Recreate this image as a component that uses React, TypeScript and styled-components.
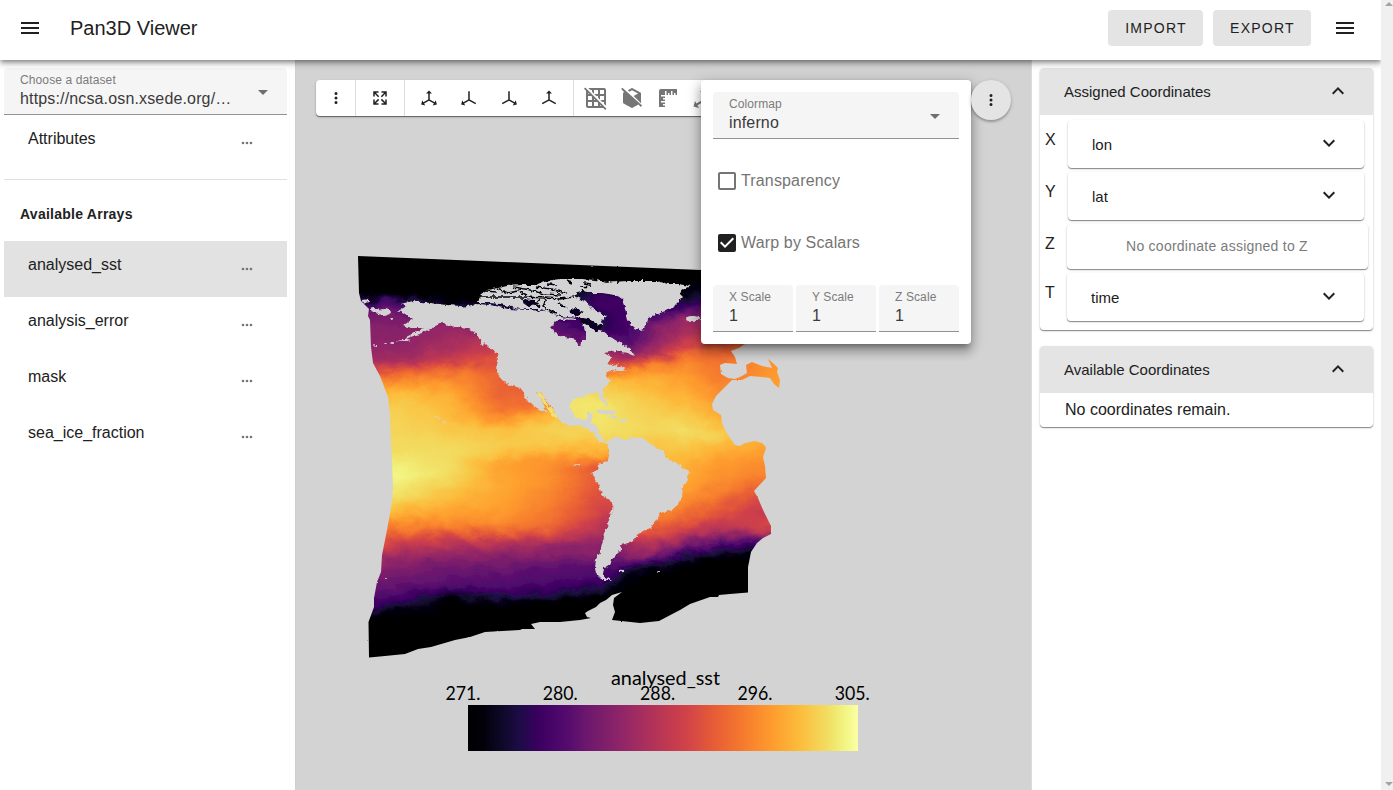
import React from "react";
import styled, { createGlobalStyle } from "styled-components";

const GlobalStyle = createGlobalStyle`
  *, *::before, *::after { box-sizing: border-box; }
  html, body { margin: 0; padding: 0; overflow: hidden; }
  body {
    font-family: "Liberation Sans", Arial, sans-serif;
    font-size: 16px;
    line-height: 24px;
    color: #212121;
    background: #fff;
  }
`;

/* ---------- layout ---------- */
const Window = styled.div`
  display: flex;
  width: 100vw;
  height: 100vh;
`;
const Page = styled.div`
  flex: 1;
  min-width: 0;
  display: flex;
  flex-direction: column;
`;
const ScrollTrack = styled.div`
  width: 12px;
  background: #f0f0f0;
  display: flex;
  flex-direction: column;
  justify-content: space-between;
  align-items: flex-end;
  padding: 2px 0 3px;
  position: relative;
  z-index: 6;
`;
const AppBar = styled.header`
  position: relative;
  z-index: 5;
  height: 60px;
  flex: none;
  display: flex;
  align-items: center;
  padding: 0 24px 4px 18px;
  background: #fff;
  box-shadow: 0 2px 4px -1px rgba(0, 0, 0, 0.3), 0 4px 5px rgba(0, 0, 0, 0.2), 0 1px 10px rgba(0, 0, 0, 0.16);
`;
const Title = styled.h1`
  margin: 0 auto 0 28px;
  font-size: 20px;
  font-weight: 400;
  line-height: 28px;
`;
const BarButton = styled.button<{ $w: number }>`
  width: ${(p) => p.$w}px;
  height: 36px;
  margin-right: 10px;
  padding: 0 0 0 1px;
  border: 0;
  border-radius: 4px;
  background: #e4e4e4;
  color: #212121;
  font: 14px "Liberation Sans", Arial, sans-serif;
  letter-spacing: 1.25px;
`;
const MenuSlot = styled.div`
  display: flex;
  margin-left: 12px;
`;
const Body = styled.div`
  flex: 1;
  min-height: 0;
  display: flex;
`;

/* ---------- left drawer ---------- */
const LeftDrawer = styled.aside`
  width: 296px;
  padding: 8px 8px 0 4px;
  border-right: 1px solid #cfcfcf;
`;
const Field = styled.div`
  flex: 1;
  height: 47px;
  display: flex;
  align-items: center;
  padding: 0 12px 0 16px;
  border-radius: 4px 4px 0 0;
  border-bottom: 1px solid #939393;
  background: #f5f5f5;
`;
const FieldText = styled.div`
  flex: 1;
  min-width: 0;
`;
const FieldLabel = styled.div`
  margin-top: 1px;
  font-size: 12px;
  line-height: 14px;
  letter-spacing: 0.11px;
  color: #7b7b7b;
  white-space: nowrap;
`;
const FieldValue = styled.div`
  font-size: 16px;
  line-height: 23px;
  letter-spacing: 0.15px;
  color: #3a3a3a;
  white-space: nowrap;
`;
const CaretSlot = styled.span`
  display: flex;
  padding-top: 2px;
`;
const ArrayRow = styled.div<{ $active?: boolean }>`
  height: 56px;
  display: flex;
  justify-content: space-between;
  padding: 12px 32px 0 24px;
  background: ${(p) => (p.$active ? "#e2e2e2" : "transparent")};
`;
const AttributesRow = styled(ArrayRow)`
  height: 65px;
  border-bottom: 1px solid #e0e0e0;
`;
const ListHeading = styled.div`
  height: 61px;
  padding: 22px 0 0 16px;
  font-size: 14px;
  font-weight: 700;
  letter-spacing: 0.25px;
`;
const DotsSlot = styled.span`
  display: flex;
  padding-top: 8px;
`;

/* ---------- viewport ---------- */
const Viewport = styled.main`
  position: relative;
  flex: 1;
  min-width: 0;
  background: #d3d3d3;
  overflow: hidden;
`;
const Scene = styled.svg`
  display: block;
  width: 735px;
  height: 730px;
`;
const Toolbar = styled.div`
  position: absolute;
  left: 20px;
  top: 20px;
  width: 655px;
  height: 36px;
  display: flex;
  border-radius: 4px;
  background: #fff;
  box-shadow: 0 1px 1px rgba(0, 0, 0, 0.5), 0 1px 3px rgba(0, 0, 0, 0.15);
`;
const ToolGroup = styled.div<{ $pad: string }>`
  display: flex;
  align-items: center;
  padding: ${(p) => p.$pad};
  & + & { border-left: 1px solid #dcdcdc; }
`;
const Tool = styled.span<{ $w: number; $muted?: boolean }>`
  width: ${(p) => p.$w}px;
  display: flex;
  justify-content: center;
  color: ${(p) => (p.$muted ? "#757575" : "#212121")};
`;
const RoundButton = styled.div`
  position: absolute;
  left: 675px;
  top: 20px;
  width: 40px;
  height: 40px;
  display: flex;
  align-items: center;
  justify-content: center;
  border-radius: 50%;
  background: #e4e4e4;
  box-shadow: 0 2px 2px rgba(0, 0, 0, 0.2), 0 1px 4px rgba(0, 0, 0, 0.16);
`;
const Popup = styled.div`
  position: absolute;
  left: 405px;
  top: 20px;
  width: 270px;
  height: 264px;
  padding: 12px;
  border-radius: 4px;
  background: #fff;
  box-shadow: 0 5px 5px -3px rgba(0, 0, 0, 0.3), 0 8px 10px 1px rgba(0, 0, 0, 0.2), 0 3px 14px 2px rgba(0, 0, 0, 0.18);
`;
const FieldLine = styled.div<{ $top?: number }>`
  display: flex;
  gap: 3px;
  padding-top: ${(p) => p.$top ?? 0}px;
`;
const CheckLine = styled.div<{ $h: number }>`
  height: ${(p) => p.$h}px;
  display: flex;
  align-items: center;
  gap: 2px;
  padding-left: 2px;
  color: #757575;
  letter-spacing: 0.15px;
`;

/* ---------- right drawer ---------- */
const RightDrawer = styled.aside`
  width: 350px;
  padding: 8px 8px 0;
  border-left: 1px solid #dcdcdc;
`;
const Panel = styled.section<{ $h: number }>`
  height: ${(p) => p.$h}px;
  margin-bottom: 16px;
  border-radius: 4px;
  background: #fff;
  box-shadow: 0 1px 1px rgba(0, 0, 0, 0.42), 0 1px 3px rgba(0, 0, 0, 0.12);
`;
const PanelHead = styled.div`
  height: 47px;
  display: flex;
  align-items: center;
  justify-content: space-between;
  padding: 0 23px 0 24px;
  border-radius: 4px 4px 0 0;
  background: #e4e4e4;
  font-size: 15px;
`;
const ChevronSlot = styled.span<{ $lift: number }>`
  display: flex;
  padding-bottom: ${(p) => p.$lift}px;
`;
const PanelText = styled.div`
  padding: 5px 25px;
`;
const AxisList = styled.div`
  display: flex;
  flex-direction: column;
  gap: 4px;
  padding: 5px 0 0 5px;
`;
const AxisRow = styled.div`
  display: flex;
`;
const AxisName = styled.div<{ $w: number }>`
  width: ${(p) => p.$w}px;
  padding-top: 8px;
`;
const AxisCard = styled.div<{ $w: number; $h: number; $empty?: boolean }>`
  width: ${(p) => p.$w}px;
  height: ${(p) => p.$h}px;
  display: flex;
  align-items: center;
  justify-content: ${(p) => (p.$empty ? "center" : "space-between")};
  padding: ${(p) => (p.$empty ? "0 24px 2px 23px" : "2px 23px 0 24px")};
  border-radius: 4px;
  background: #fff;
  box-shadow: 0 1px 1px rgba(0, 0, 0, 0.42), 0 1px 3px rgba(0, 0, 0, 0.12);
  font-size: ${(p) => (p.$empty ? 14 : 15)}px;
  letter-spacing: ${(p) => (p.$empty ? 0.25 : 0)}px;
  color: ${(p) => (p.$empty ? "#7b7b7b" : "#212121")};
`;

/* ---------- icons ---------- */
const paths = {
  menu: "M3,6H21V8H3V6M3,11H21V13H3V11M3,16H21V18H3V16Z",
  dots: "M12,16A2,2 0 0,1 14,18A2,2 0 0,1 12,20A2,2 0 0,1 10,18A2,2 0 0,1 12,16M12,10A2,2 0 0,1 14,12A2,2 0 0,1 12,14A2,2 0 0,1 10,12A2,2 0 0,1 12,10M12,4A2,2 0 0,1 14,6A2,2 0 0,1 12,8A2,2 0 0,1 10,6A2,2 0 0,1 12,4Z",
  dotsH: "M16,12A2,2 0 0,1 18,10A2,2 0 0,1 20,12A2,2 0 0,1 18,14A2,2 0 0,1 16,12M10,12A2,2 0 0,1 12,10A2,2 0 0,1 14,12A2,2 0 0,1 12,14A2,2 0 0,1 10,12M4,12A2,2 0 0,1 6,10A2,2 0 0,1 8,12A2,2 0 0,1 6,14A2,2 0 0,1 4,12Z",
  expand: "M9.5,13.09L10.91,14.5L6.41,19H10V21H3V14H5V17.59L9.5,13.09M10.91,9.5L9.5,10.91L5,6.41V10H3V3H10V5H6.41L10.91,9.5M14.5,13.09L19,17.59V14H21V21H14V19H17.59L13.09,14.5L14.5,13.09M13.09,9.5L17.59,5H14V3H21V10H19V6.41L14.5,10.91L13.09,9.5Z",
  axis: "M12,2L16,6H13V13.85L19.53,17.61L21,15.03L22.5,20.5L17,21.96L18.53,19.35L12,15.58L5.47,19.35L7,21.96L1.5,20.5L3,15.03L4.47,17.61L11,13.85V6H8L12,2Z",
  axisX: "M13,3V13.85L21.5,18.75L20.5,20.48L12,15.58L5.47,19.35L7,21.96L1.5,20.5L3,15.03L4.47,17.61L11,13.85V3H13Z",
  axisY: "M11,3V13.85L2.5,18.75L3.5,20.48L12,15.58L18.53,19.35L17,21.96L22.5,20.5L21,15.03L19.53,17.61L13,13.85V3H11Z",
  axisZ: "M12,2L16,6H13V13.85L21.5,18.75L20.5,20.48L12,15.58L3.5,20.48L2.5,18.75L11,13.85V6H8L12,2Z",
  gridOff: "M0,2.77L1.28,1.5L22.5,22.72L21.23,24L19.23,22H4C2.92,22 2,21.1 2,20V4.77L0,2.77M10,4V7.68L8,5.68V4H6.32L4.32,2H20A2,2 0 0,1 22,4V19.7L20,17.7V16H18.32L16.32,14H20V10H16V13.68L14,11.68V10H12.32L10.32,8H14V4H10M16,4V8H20V4H16M16,20H17.23L16,18.77V20M4,8H5.23L4,6.77V8M10,14H11.23L10,12.77V14M14,20V16.77L13.23,16H10V20H14M8,20V16H4V20H8M8,14V10.77L7.23,10H4V14H8Z",
  cubeOff: "M2.39,1.73L1.11,3L4.28,6.17L3.53,6.59C3.21,6.76 3,7.1 3,7.5V16.5C3,16.88 3.21,17.21 3.53,17.38L11.43,21.82C11.59,21.94 11.79,22 12,22C12.21,22 12.41,21.94 12.57,21.82L18.44,18.5L20.84,20.9L22.11,19.62L2.39,1.73M12,2C11.79,2 11.59,2.06 11.43,2.18L7.9,4.16L9.37,5.63L12,4.15L18.04,7.5L13.6,9.98L21,17.2V7.5C21,7.12 20.79,6.79 20.47,6.62L12.57,2.18C12.41,2.06 12.21,2 12,2Z",
  ruler: "M3,5V21H9V19.5H7V18H9V16.5H5V15H9V13.5H7V12H9V10.5H5V9H9V5H10.5V9H12V7H13.5V9H15V5H16.5V9H18V7H19.5V9H21V3H5A2,2 0 0,0 3,5Z",
  down: "M7.41,8.58L12,13.17L16.59,8.58L18,10L12,16L6,10L7.41,8.58Z",
  up: "M7.41,15.41L12,10.83L16.59,15.41L18,14L12,8L6,14L7.41,15.41Z",
  caret: "M7,10L12,15L17,10H7Z",
  box: "M19,3H5C3.89,3 3,3.89 3,5V19A2,2 0 0,0 5,21H19A2,2 0 0,0 21,19V5C21,3.89 20.1,3 19,3M19,5V19H5V5H19Z",
  boxOn: "M10,17L5,12L6.41,10.58L10,14.17L17.59,6.58L19,8M19,3H5C3.89,3 3,3.89 3,5V19A2,2 0 0,0 5,21H19A2,2 0 0,0 21,19V5C21,3.89 20.1,3 19,3Z",
};
const Svg = styled.svg`
  display: block;
  flex: none;
`;
const Icon = ({ name, size = 24, color = "currentColor" }: { name: keyof typeof paths; size?: number; color?: string }) => (
  <Svg width={size} height={size} viewBox="0 0 24 24" fill={color} fillRule="evenodd">
    <path d={paths[name]} />
  </Svg>
);

/* ---------- colour map ---------- */
type Stop = [number, number, number, number];
const inferno: Stop[] = [
  [0, 0, 0, 2], [0.04, 2, 1, 10], [0.08, 12, 8, 36], [0.13, 28, 12, 68], [0.18, 58, 0, 96], [0.25, 82, 10, 109],
  [0.3, 106, 23, 110], [0.4, 147, 38, 103], [0.5, 188, 55, 84], [0.56, 209, 66, 73], [0.62, 228, 88, 56],
  [0.7, 245, 120, 46], [0.78, 254, 156, 45], [0.85, 252, 188, 60], [0.92, 242, 220, 96], [0.96, 241, 242, 125], [1, 252, 255, 164],
];
const colorAt = (t: number) => {
  const v = Math.max(0, Math.min(1, t));
  let i = 1;
  while (i < inferno.length - 1 && inferno[i][0] < v) i++;
  const a = inferno[i - 1];
  const b = inferno[i];
  const f = (v - a[0]) / (b[0] - a[0]);
  const c = [1, 2, 3].map((k) => Math.round(a[k] + (b[k] - a[k]) * f));
  return `rgb(${c.join(",")})`;
};

/* Temperature profiles: x position, then [y, value] pairs from north to south. */
type Profile = { x: number; v: [number, number][] };
const pacific: Profile[] = [
  { x: 362, v: [[294, 0], [300, 0.15], [308, 0.3], [320, 0.36], [350, 0.4], [364, 0.46], [374, 0.6], [382, 0.74], [395, 0.85], [412, 0.9], [450, 0.91], [475, 0.96], [500, 0.93], [513, 0.86], [524, 0.76], [538, 0.64], [556, 0.5], [575, 0.36], [592, 0.28], [608, 0.2], [615, 0.06], [620, 0]] },
  { x: 400, v: [[294, 0], [299, 0.13], [306, 0.27], [322, 0.35], [350, 0.4], [362, 0.46], [371, 0.62], [380, 0.74], [393, 0.85], [410, 0.89], [450, 0.92], [475, 0.97], [498, 0.92], [512, 0.84], [524, 0.74], [536, 0.62], [550, 0.48], [564, 0.36], [585, 0.28], [602, 0.18], [610, 0.06], [616, 0]] },
  { x: 450, v: [[298, 0], [303, 0.08], [325, 0.4], [350, 0.46], [360, 0.53], [367, 0.64], [377, 0.74], [395, 0.82], [425, 0.87], [450, 0.92], [475, 0.92], [492, 0.87], [510, 0.8], [526, 0.72], [537, 0.58], [549, 0.44], [565, 0.32], [585, 0.26], [595, 0.1], [599, 0]] },
  { x: 500, v: [[300, 0], [304, 0.12], [335, 0.48], [355, 0.58], [370, 0.65], [395, 0.65], [410, 0.69], [420, 0.77], [430, 0.85], [444, 0.89], [455, 0.86], [463, 0.79], [485, 0.81], [505, 0.79], [522, 0.75], [533, 0.67], [542, 0.5], [557, 0.37], [572, 0.28], [591, 0.22], [600, 0.1], [606, 0]] },
  { x: 550, v: [[300, 0], [306, 0.1], [385, 0.6], [403, 0.7], [414, 0.82], [428, 0.9], [440, 0.88], [452, 0.83], [460, 0.76], [485, 0.75], [507, 0.71], [525, 0.67], [536, 0.56], [545, 0.42], [562, 0.3], [583, 0.22], [595, 0.13], [603, 0]] },
  { x: 605, v: [[300, 0], [420, 0.92], [440, 0.89], [452, 0.83], [460, 0.72], [468, 0.6], [485, 0.6], [510, 0.56], [525, 0.48], [543, 0.4], [560, 0.3], [580, 0.22], [591, 0.1], [597, 0]] },
];
const atlantic: Profile[] = [
  { x: 550, v: [[285, 0], [308, 0.02], [318, 0.22], [325, 0.28], [340, 0.3], [360, 0.5], [375, 0.8], [392, 0.94], [440, 0.92], [560, 0.3], [580, 0.15], [596, 0]] },
  { x: 602, v: [[285, 0.02], [293, 0.18], [305, 0.2], [315, 0.15], [330, 0.14], [345, 0.38], [360, 0.52], [372, 0.66], [380, 0.8], [390, 0.9], [405, 0.94], [430, 0.93], [450, 0.88], [545, 0.3], [565, 0.26], [580, 0.2], [591, 0.07], [598, 0]] },
  { x: 630, v: [[285, 0], [295, 0.18], [320, 0.22], [338, 0.22], [352, 0.34], [362, 0.53], [370, 0.72], [380, 0.83], [400, 0.9], [430, 0.92], [448, 0.88], [530, 0.65], [543, 0.47], [556, 0.38], [567, 0.2], [576, 0.05], [583, 0]] },
  { x: 655, v: [[285, 0], [300, 0.1], [315, 0.24], [325, 0.35], [340, 0.38], [354, 0.46], [363, 0.7], [375, 0.8], [400, 0.87], [425, 0.91], [440, 0.88], [460, 0.85], [500, 0.78], [520, 0.69], [535, 0.58], [550, 0.42], [560, 0.22], [570, 0.05], [577, 0]] },
  { x: 685, v: [[285, 0], [296, 0.06], [308, 0.2], [320, 0.4], [340, 0.5], [352, 0.64], [365, 0.74], [385, 0.8], [405, 0.85], [430, 0.93], [448, 0.87], [470, 0.82], [493, 0.77], [508, 0.72], [520, 0.64], [534, 0.5], [545, 0.34], [555, 0.17], [563, 0.03], [570, 0]] },
  { x: 720, v: [[275, 0], [290, 0.14], [312, 0.38], [335, 0.54], [352, 0.67], [378, 0.71], [400, 0.77], [420, 0.83], [435, 0.9], [448, 0.84], [460, 0.78], [485, 0.74], [502, 0.66], [517, 0.58], [531, 0.45], [541, 0.28], [551, 0.13], [560, 0]] },
  { x: 784, v: [[275, 0], [310, 0.4], [345, 0.66], [360, 0.78], [430, 0.8], [455, 0.76], [480, 0.7], [494, 0.55], [512, 0.47], [526, 0.6], [533, 0.5], [541, 0.25], [551, 0.08], [558, 0]] },
];
const sample = (p: Profile, y: number) => {
  const v = p.v;
  if (y <= v[0][0]) return v[0][1];
  for (let i = 1; i < v.length; i++) {
    if (y <= v[i][0]) {
      const f = (y - v[i - 1][0]) / (v[i][0] - v[i - 1][0]);
      return v[i - 1][1] + (v[i][1] - v[i - 1][1]) * f;
    }
  }
  return v[v.length - 1][1];
};
const field = (cols: Profile[], x: number, y: number) => {
  let i = 1;
  while (i < cols.length - 1 && cols[i].x < x) i++;
  const a = cols[i - 1];
  const b = cols[i];
  const f = Math.max(0, Math.min(1, (x - a.x) / (b.x - a.x)));
  return sample(a, y) * (1 - f) + sample(b, y) * f;
};
const TOP = 250;
const BOTTOM = 662;
const ROWS = Array.from({ length: 83 }, (_, i) => TOP + ((BOTTOM - TOP) * i) / 82);

const Strips = ({ id, cols, from, to }: { id: string; cols: Profile[]; from: number; to: number }) => {
  const n = Math.ceil((to - from) / 3);
  return (
    <>
      {Array.from({ length: n }, (_, i) => {
        const x = from + i * 3;
        return (
          <g key={x}>
            <linearGradient id={`${id}${i}`} x1="0" y1="0" x2="0" y2="1">
              {ROWS.map((y) => (
                <stop key={y} offset={(y - TOP) / (BOTTOM - TOP)} stopColor={colorAt(field(cols, x + 1.5, y))} />
              ))}
            </linearGradient>
            <rect x={x} y={TOP} width="3.5" height={BOTTOM - TOP} fill={`url(#${id}${i})`} />
          </g>
        );
      })}
    </>
  );
};

const OCEAN =
  "M358,256L701,270L745,272L745,344L739,348L731,351L735,357L737,364L725,363L720,365L721,374L728,378L735,379L742,376L747,373L746,365L752,362L762,366L772,368L768,359L773,363L778,368L777,372L780,380L779,388L774,384L770,378L762,377L750,376L742,380L732,380L724,388L716,396L712,404L713,410L721,415L722,423L724,428L730,438L735,445L740,446L745,443L755,441L762,443L765,446L766,448L763,457L765,466L766,478L754,491L758,498L760,503L764,512L771,526L771,534L763,538L757,543L751,552L748,567L748,592.5L730,594L719,595L718,597L710,597L690,604L680,610L659,621L640,623L612,620L615,612L613,605L614,598L622,592L612,595L606,600L600,603L596,607L588,611L585,613L587,617L591,618L580,620L560,622L540,622L531,624L535,629L522,629L520,630L485,632L470,637L455,640L431,647L418,649L405,654L385,656L369,657.5L368.5,622L374,607L374,598L377,582L381,572L382,555L387,530L391,508L393,490L392,460L391,440L390,415L388,397L380,376L373,363L371,347L370,320L368,316L369,309L361,301L359,293Z";
const AMERICAS =
  "M398,311L405,307L401,304L412,301L430,303L447,305L465,306.5L476,304L490,305L508,309L528,310L545,311L553,314L560,317L568,318L576,319L576,320L566,319.5L556,321L551,328L555,333L565,337L576,339L578,346L580,346L582,340L586,339L586,334L584,328L582,322L588,324L596,329L603,331L612,338L622,344L631,350L635,356L628,353L615,351L605,353L612,357L608,363L613,366L620,363L616,369L609,371L605,374L607,378L612,380L605,387L603,391L603,397L607,405L604,403L600,399L597,393L588,394L580,397L572,400L570,408L575,417L582,420L587,419L588,413L593,413L591,424L598,427L600,437L605,442L610,440L616,436L625,439L632,437L643,438L652,445L662,450L665,457L677,464L689,471L688,478L683,487L682,497L677,505L672,510L660,513L657,520L650,528L640,533L632,542L620,545L621,550L613,558L610,564L604,568L603,575L611,580L602,580L596,574L595,568L596,560L600,553L603,540L607,527L612,510L613,502L602,495L598,483L591,473L597,470L598,465L608,460L610,450L607,443L600,442L593,433L585,427L576,426L567,425L560,422L555,414L550,405L545,399L539,392L537,393L542,400L545,408L548,412L543,411L537,408L527,400L520,388L510,385L502,380L497,372L498,355L490,348L484,342L478,337L473,331L467,328L450,326L442,323L433,327L422,333L405,339L396,342L410,335L424,328L411,328L403,325L413,318L404,314Z";
const GREENLAND =
  "M582,288L592,284L605,283L627,281L657,281L668,284L678,284L690,286L684,289L679,293L683,297L677,303L673,308L660,313L648,318L647,323L643,330L637,329L632,326L628,320L625,308L622,300L615,295L602,293L588,293Z";
const ARCTIC =
  "M478,303L480,296L487,290L498,288L507,286L522,285L536,285L544,281L560,279L580,279L596,280L606,282L596,286L586,289L578,292L574,296L580,299L588,303L592,308L600,312L607,317L602,321L603,325L594,325L584,320L578,318L566,317L553,314L540,309L520,309L500,304L490,303Z";
const SPECKS: [number, number, number, number][] = [
  [384, 312, 7, 3], [375, 310, 5, 2], [366, 301, 4, 1.5], [391, 318, 2, 1], [405, 340, 5, 1], [393, 343, 3, 1], [385, 344, 2, 1], [376, 346, 2, 1],
  [693, 319, 7, 3], [607, 412, 9, 2], [600, 411, 3, 1.5], [613, 417, 4, 1.5], [623, 420, 4, 1.5], [625, 440, 2, 1],
  [577, 465, 3, 1], [621, 571, 3, 1.3], [658, 572, 2, 1], [444, 422, 1.5, 1], [436, 417, 1.5, 1], [439, 418, 1, 1], [386, 578, 1, 1],
  [482, 341, 2, 5], [496, 350, 2, 3], [606, 403, 1, 4], [620, 369, 6, 2],
];
const CHANNELS =
  "M479,297L500,297L524,297L545,298L560,299L574,297M498,289L508,293L518,291L527,295M514,287L530,290L545,294L560,295M536,287L550,289L566,293M566,281L572,283M548,284L556,285M584,283L592,284M580,287L592,286M546,298L543,306L550,311L556,313M540,299L536,304L540,307M486,291L496,292M558,303L566,308";
const BLACK_WATER =
  "M521,299L534,300L537,304L529,307L523,303ZM568,310L574,308L584,312L578,316L570,314ZM575,317L588,319L603,326L596,332L590,327L580,321Z";

const DataScene = () => (
  <Scene viewBox="296 60 735 730">
    <defs>
      <filter id="coast" x="-2%" y="-2%" width="104%" height="104%">
        <feTurbulence type="fractalNoise" baseFrequency="0.24" numOctaves="2" seed="4" />
        <feDisplacementMap in="SourceGraphic" scale="5" xChannelSelector="R" yChannelSelector="G" />
      </filter>
      <filter id="edge" x="-2%" y="-2%" width="104%" height="104%">
        <feTurbulence type="fractalNoise" baseFrequency="0.2" numOctaves="2" seed="9" />
        <feDisplacementMap in="SourceGraphic" scale="1.6" xChannelSelector="R" yChannelSelector="G" />
      </filter>
      <filter id="swirl" x="-3%" y="-3%" width="106%" height="106%">
        <feTurbulence type="fractalNoise" baseFrequency="0.05 0.08" numOctaves="4" seed="12" />
        <feDisplacementMap in="SourceGraphic" scale="13" xChannelSelector="R" yChannelSelector="G" />
      </filter>
      <mask id="oceanMask" maskUnits="userSpaceOnUse" x="340" y="240" width="460" height="430">
        <path d={OCEAN} fill="#fff" filter="url(#edge)" />
      </mask>
      <clipPath id="east">
        <path d="M548,290L560,260L790,260L790,640L590,640L604,590L601,577L640,500L616,450L602,439L588,425L578,423L566,412L562,395L580,350L546,340Z" />
      </clipPath>
      <linearGradient id="legend">
        {inferno.map(([t]) => (
          <stop key={t} offset={t} stopColor={colorAt(t)} />
        ))}
      </linearGradient>
    </defs>
    <g mask="url(#oceanMask)">
      <g filter="url(#swirl)">
        <Strips id="p" cols={pacific} from={340} to={625} />
      </g>
      <g clipPath="url(#east)">
        <g filter="url(#swirl)">
          <Strips id="a" cols={atlantic} from={540} to={797} />
        </g>
      </g>
    </g>
    <g fill="#d3d3d3" filter="url(#coast)">
      <path d={AMERICAS} />
      <path d={GREENLAND} />
      <path d={ARCTIC} />
      {SPECKS.map(([x, y, rx, ry]) => (
        <ellipse key={`${x}-${y}`} cx={x} cy={y} rx={rx} ry={ry} />
      ))}
      <path d={CHANNELS} fill="none" stroke="#05030f" strokeWidth="1.5" />
      <path d={BLACK_WATER} fill="#0b0522" />
      <path d="M538,393L543,399L548,407L553,414L557,418" fill="none" stroke="#f1e36a" strokeWidth="3" />
    </g>
    <rect x="468" y="705" width="390" height="46" fill="url(#legend)" />
    <g fontFamily="Lato, sans-serif" fontSize="19.5" fill="#000">
      <text x="611" y="685" textLength="109" lengthAdjust="spacingAndGlyphs">analysed_sst</text>
      {["271.", "280.", "288.", "296.", "305."].map((t, i) => (
        <text key={t} x={445.5 + i * 97.3} y="700" textLength="35" lengthAdjust="spacingAndGlyphs">{t}</text>
      ))}
    </g>
  </Scene>
);

const TextField = ({ label, value, select }: { label: string; value: string; select?: boolean }) => (
  <Field>
    <FieldText>
      <FieldLabel>{label}</FieldLabel>
      <FieldValue>{value}</FieldValue>
    </FieldText>
    {select && (
      <CaretSlot>
        <Icon name="caret" color="#6f6f6f" />
      </CaretSlot>
    )}
  </Field>
);

const Dots = () => (
  <DotsSlot>
    <Icon name="dotsH" size={16} color="#757575" />
  </DotsSlot>
);

const axes = [
  { name: "X", label: "lon", gap: 23, w: 296, h: 48 },
  { name: "Y", label: "lat", gap: 23, w: 296, h: 48 },
  { name: "Z", label: "No coordinate assigned to Z", gap: 22, w: 301, h: 45, empty: true },
  { name: "T", label: "time", gap: 22, w: 297, h: 48 },
];

export default function App() {
  return (
    <Window>
      <GlobalStyle />
      <Page>
        <AppBar>
          <Icon name="menu" />
          <Title>Pan3D Viewer</Title>
          <BarButton $w={95}>IMPORT</BarButton>
          <BarButton $w={98}>EXPORT</BarButton>
          <MenuSlot>
            <Icon name="menu" />
          </MenuSlot>
        </AppBar>
        <Body>
          <LeftDrawer>
            <TextField label="Choose a dataset" value="https://ncsa.osn.xsede.org/…" select />
            <AttributesRow>
              Attributes
              <Dots />
            </AttributesRow>
            <ListHeading>Available Arrays</ListHeading>
            {["analysed_sst", "analysis_error", "mask", "sea_ice_fraction"].map((name, i) => (
              <ArrayRow key={name} $active={i === 0}>
                {name}
                <Dots />
              </ArrayRow>
            ))}
          </LeftDrawer>
          <Viewport>
            <DataScene />
            <Toolbar>
              <ToolGroup $pad="0">
                <Tool $w={39}><Icon name="dots" size={18} /></Tool>
              </ToolGroup>
              <ToolGroup $pad="0 4px">
                <Tool $w={40}><Icon name="expand" size={18} /></Tool>
              </ToolGroup>
              <ToolGroup $pad="0 4px">
                <Tool $w={40}><Icon name="axis" size={18} /></Tool>
                <Tool $w={40}><Icon name="axisX" size={18} /></Tool>
                <Tool $w={40}><Icon name="axisY" size={18} /></Tool>
                <Tool $w={40}><Icon name="axisZ" size={18} /></Tool>
              </ToolGroup>
              <ToolGroup $pad="0 4px">
                <Tool $w={36} $muted><Icon name="gridOff" /></Tool>
                <Tool $w={36} $muted><Icon name="cubeOff" /></Tool>
                <Tool $w={36} $muted><Icon name="ruler" /></Tool>
                <Tool $w={36} $muted><Icon name="axis" /></Tool>
              </ToolGroup>
            </Toolbar>
            <Popup>
              <FieldLine>
                <TextField label="Colormap" value="inferno" select />
              </FieldLine>
              <CheckLine $h={84}>
                <Icon name="box" />
                Transparency
              </CheckLine>
              <CheckLine $h={40}>
                <Icon name="boxOn" color="#212121" />
                Warp by Scalars
              </CheckLine>
              <FieldLine $top={22}>
                <TextField label="X Scale" value="1" />
                <TextField label="Y Scale" value="1" />
                <TextField label="Z Scale" value="1" />
              </FieldLine>
            </Popup>
            <RoundButton>
              <Icon name="dots" size={18} />
            </RoundButton>
          </Viewport>
          <RightDrawer>
            <Panel $h={262}>
              <PanelHead>
                Assigned Coordinates
                <ChevronSlot $lift={2}>
                  <Icon name="up" />
                </ChevronSlot>
              </PanelHead>
              <AxisList>
                {axes.map((a) => (
                  <AxisRow key={a.name}>
                    <AxisName $w={a.gap}>{a.name}</AxisName>
                    <AxisCard $w={a.w} $h={a.h} $empty={a.empty}>
                      {a.label}
                      {!a.empty && (
                        <ChevronSlot $lift={4}>
                          <Icon name="down" />
                        </ChevronSlot>
                      )}
                    </AxisCard>
                  </AxisRow>
                ))}
              </AxisList>
            </Panel>
            <Panel $h={81}>
              <PanelHead>
                Available Coordinates
                <ChevronSlot $lift={2}>
                  <Icon name="up" />
                </ChevronSlot>
              </PanelHead>
              <PanelText>No coordinates remain.</PanelText>
            </Panel>
          </RightDrawer>
        </Body>
      </Page>
      <ScrollTrack>
        <Svg width="8" height="8" viewBox="0 0 8 8"><path d="M0,4L4,0L8,4Z" fill="#a3a3a3" /></Svg>
        <Svg width="8" height="5" viewBox="0 0 8 5"><path d="M0,0L4,4L8,0Z" fill="#a3a3a3" /></Svg>
      </ScrollTrack>
    </Window>
  );
}
